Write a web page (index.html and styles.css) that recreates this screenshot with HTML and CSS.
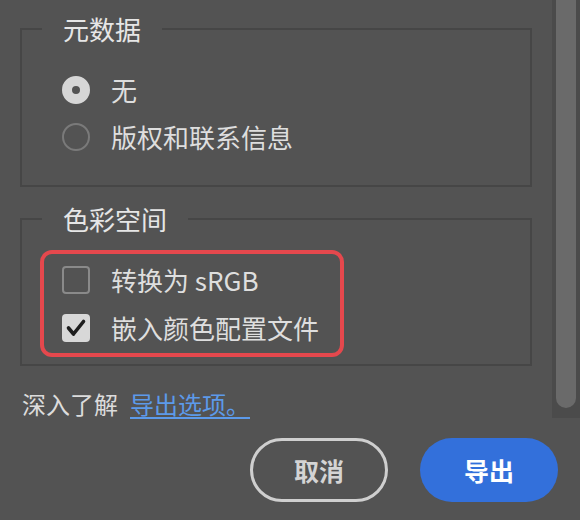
FILE: index.html
```html
<!DOCTYPE html>
<html lang="zh-CN">
<head>
  <meta charset="UTF-8">
  <title>导出</title>
  <link rel="stylesheet" href="styles.css">
</head>
<body>
  <div class="dialog">
    <div class="scroll-area">
      <div class="content">
        <fieldset class="group group-meta">
          <legend>元数据</legend>
          <label class="option"><span class="radio checked"></span>无</label>
          <label class="option"><span class="radio"></span>版权和联系信息</label>
        </fieldset>

        <fieldset class="group group-color">
          <legend>色彩空间</legend>
          <div class="highlight">
            <label class="option"><span class="checkbox"></span>转换为 sRGB</label>
            <label class="option">
              <span class="checkbox checked">
                <svg width="28" height="28" viewBox="0 0 28 28"><path d="M6.5 14 L11.5 20 L21.5 7.5" fill="none" stroke="#1e1e1e" stroke-width="3.6" stroke-linecap="round" stroke-linejoin="round"/></svg>
              </span>嵌入颜色配置文件
            </label>
          </div>
        </fieldset>

        <p class="learn-more">深入了解<a href="#">导出选项。</a></p>
      </div>

      <div class="scrollbar">
        <div class="thumb"></div>
      </div>
    </div>

    <div class="actions">
      <button class="btn btn-secondary">取消</button>
      <button class="btn btn-primary">导出</button>
    </div>
  </div>
</body>
</html>
```

FILE: styles.css
```css
body {
  margin: 0;
  background-color: #535353;
  font-family: "Noto Sans CJK SC", "Noto Sans", sans-serif;
  color: #e0e0e0;
}

.dialog {
  width: 580px;
  height: 520px;
  overflow: hidden;
}

.scroll-area {
  display: flex;
  height: 418px;
}

.content {
  flex: 1;
  padding: 11px 20px 0 20px;
}

.group {
  margin: 0;
  padding: 0 20px;
  border: 2px solid #464646;
  min-inline-size: 0;
}

.group legend {
  padding: 0 21px;
  font-size: 26px;
  line-height: 36px;
  color: #e6e6e6;
}

.group-meta {
  padding-top: 19px;
  padding-bottom: 25px;
}

.group-meta .option {
  margin-left: 20px;
}

.group-color {
  margin-top: 14px;
  padding-top: 13px;
  padding-bottom: 7px;
}

.option {
  display: flex;
  align-items: center;
  gap: 21px;
  height: 47px;
  font-size: 26px;
  line-height: 36px;
  color: #dedede;
}

.radio {
  width: 28px;
  height: 28px;
  box-sizing: border-box;
  border-radius: 50%;
  border: 2px solid #7a7a7a;
  flex-shrink: 0;
}

.radio.checked {
  border: 10px solid #d6d6d6;
  background: #535353;
}

.highlight {
  width: 304px;
  box-sizing: border-box;
  margin-left: -2px;
  padding: 2px 0 1px 18px;
  border: 4px solid #e5484d;
  border-radius: 12px;
}

.highlight .option {
  height: 48px;
}

.checkbox {
  width: 28px;
  height: 28px;
  box-sizing: border-box;
  border: 2px solid #8a8a8a;
  border-radius: 4px;
  flex-shrink: 0;
}

.checkbox.checked {
  border: none;
  background: #d8d8d8;
}

.checkbox svg {
  display: block;
}

.learn-more {
  margin: 26px 0 0 2px;
  font-size: 24px;
  line-height: 24px;
  color: #dcdcdc;
}

.learn-more a {
  margin-left: 12px;
  color: #5c9aea;
  text-decoration: underline;
  text-decoration-thickness: 2px;
  text-underline-offset: 3px;
}

.scrollbar {
  width: 28px;
  padding: 0 4px 10px;
  box-sizing: border-box;
  background: #4b4b4b;
}

.thumb {
  height: 100%;
  background: #6a6a6a;
  border-radius: 0 0 10px 10px;
}

.actions {
  display: flex;
  justify-content: flex-end;
  gap: 32px;
  margin-top: 20px;
  padding-right: 22px;
}

.btn {
  width: 138px;
  height: 64px;
  border-radius: 32px;
  font-family: "Noto Sans CJK SC", sans-serif;
  font-size: 25px;
  font-weight: 700;
  cursor: pointer;
}

.btn-secondary {
  background: transparent;
  border: 3px solid #cfcfcf;
  color: #d4d4d4;
}

.btn-primary {
  background: #3370db;
  border: none;
  color: #ffffff;
}
```
